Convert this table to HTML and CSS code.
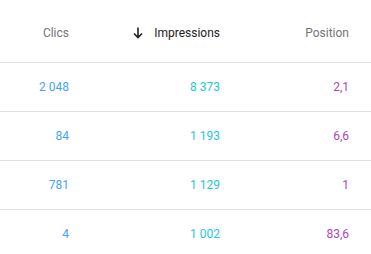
FILE: index.html
```html
<!DOCTYPE html>
<html>
<head>
<meta charset="utf-8">
<link rel="stylesheet" href="styles.css">
</head>
<body>
<div class="table">
  <div class="row head">
    <div class="cell c1">Clics</div>
    <div class="cell c2 sorted">
      <svg class="arrow" width="10" height="12" viewBox="0 0 10 12"><path d="M5 0.5V10.5M1 6.5L5 10.5L9 6.5" fill="none" stroke="#212121" stroke-width="1.6"/></svg>
      <span>Impressions</span>
    </div>
    <div class="cell c3">Position</div>
  </div>
  <div class="row">
    <div class="cell c1 clics">2 048</div>
    <div class="cell c2 impr">8 373</div>
    <div class="cell c3 pos">2,1</div>
  </div>
  <div class="row">
    <div class="cell c1 clics">84</div>
    <div class="cell c2 impr">1 193</div>
    <div class="cell c3 pos">6,6</div>
  </div>
  <div class="row">
    <div class="cell c1 clics">781</div>
    <div class="cell c2 impr">1 129</div>
    <div class="cell c3 pos">1</div>
  </div>
  <div class="row last">
    <div class="cell c1 clics">4</div>
    <div class="cell c2 impr">1 002</div>
    <div class="cell c3 pos">83,6</div>
  </div>
</div>
</body>
</html>
```
FILE: styles.css
```css
html, body {
  margin: 0;
  padding: 0;
  background: #ffffff;
}
body {
  font-family: Roboto, "Liberation Sans", sans-serif;
  font-size: 12px;
}
.table {
  width: 371px;
}
.row {
  display: grid;
  grid-template-columns: 69px 151px 129px;
  height: 48px;
  align-items: center;
  border-bottom: 1px solid #e0e0e0;
}
.row.head {
  height: 58px;
  padding-top: 4px;
}
.row.last {
  border-bottom: none;
}
.cell {
  text-align: right;
  line-height: 16px;
}
.head .cell {
  color: #757575;
}
.head .sorted {
  color: #212121;
  display: flex;
  justify-content: flex-end;
  align-items: center;
  gap: 11px;
}
.arrow {
  display: block;
}
.clics { color: #42a5f5; }
.impr { color: #26c6da; }
.pos { color: #ab47bc; }
```
